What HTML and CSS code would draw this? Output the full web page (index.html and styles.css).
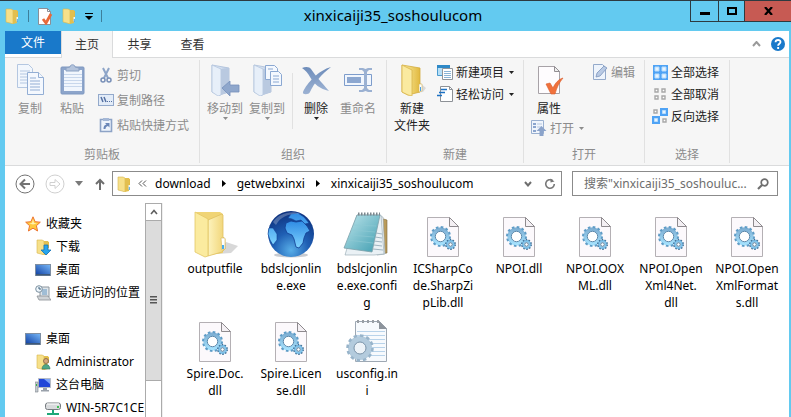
FILE: index.html
```html
<!DOCTYPE html>
<html lang="zh-CN">

<head>
    <meta charset="UTF-8">
    <meta name="viewport" content="width=device-width, initial-scale=1.0">
    <title>xinxicaiji35_soshoulucom</title>
    <link rel="stylesheet" href="styles.css">
</head>

<body>

    <!-- shared icons -->
    <svg class="sprites" width="0" height="0" aria-hidden="true">
        <defs>
            <linearGradient id="gold" x1="0" x2="1"><stop offset="0" stop-color="#fbf0a8"/><stop offset="1" stop-color="#e2b93f"/></linearGradient>
            <linearGradient id="paleGold" x1="0" x2="1"><stop offset="0" stop-color="#fdf3bd"/><stop offset="1" stop-color="#f0d373"/></linearGradient>
            <linearGradient id="fade" x1="0" x2="1"><stop offset="0" stop-color="#eef4fb"/><stop offset="1" stop-color="#b9cae3"/></linearGradient>
            <linearGradient id="steel" x1="0" x2="0" y1="0" y2="1"><stop offset="0" stop-color="#6d8cba"/><stop offset="1" stop-color="#9cb2d3"/></linearGradient>
            <linearGradient id="screen" x1="0" x2="1" y1="1" y2="0"><stop offset="0" stop-color="#1546a8"/><stop offset="1" stop-color="#74b4f5"/></linearGradient>
            <radialGradient id="globe" cx=".5" cy=".85" r=".85"><stop offset="0" stop-color="#58aee8"/><stop offset=".45" stop-color="#1f5fb4"/><stop offset="1" stop-color="#0c2f7c"/></radialGradient>
            <linearGradient id="land" x1="0" x2="0" y1="0" y2="1"><stop offset="0" stop-color="#2f8be4"/><stop offset="1" stop-color="#7fd4ff"/></linearGradient>
            <linearGradient id="pad" x1="0" x2="1" y1="0" y2="1"><stop offset="0" stop-color="#bfe6ec"/><stop offset="1" stop-color="#3f9db0"/></linearGradient>
            <linearGradient id="gear" x1="0" x2="0" y1="0" y2="1"><stop offset="0" stop-color="#7fb0d4"/><stop offset="1" stop-color="#a4e0fc"/></linearGradient>
        </defs>
        <symbol id="folder-small" viewBox="0 0 16 16">
            <path d="M3 3l9-1 2 1v10l-3 1-8-1z" fill="url(#gold)"/>
            <path d="M2 1h5l2 1v14l-3-1-4-1z" fill="#f6e08a" stroke="#d8b64c" stroke-width=".6"/>
            <path d="M9 2v14l4-1V2z" fill="#e2bf4f"/>
            <path d="M12.500 9v4.500h1.500V9z" fill="#eef6fb"/><path d="M12.800 11h1v3h-1z" fill="#4fa3dc"/>
        </symbol>
        <symbol id="folder-faded" viewBox="0 0 32 32">
            <path d="M3 1l17 3v24L10 31 3 28z" fill="url(#fade)" stroke="#a9bcd8" stroke-width=".8"/>
            <path d="M3 1l9 4v26l-3 1-6-4z" fill="#e7eff9" stroke="#b4c5de" stroke-width=".8"/>
            <path d="M12 5l8-1v24l-8 3z" fill="#b9c9e0"/>
        </symbol>
        <symbol id="dll" viewBox="0 0 34 42">
            <path d="M1.500 1.500h22l9 9v30h-31z" fill="#fcf9fc" stroke="#b4b0b4"/>
            <path d="M23.500 1.500v9h9z" fill="#f4f0f4" stroke="#8e8a8e"/>
            <circle cx="14.500" cy="20.500" r="7.200" fill="none" stroke="url(#gear)" stroke-width="4"/>
            <circle cx="14.500" cy="20.500" r="9.500" fill="none" stroke="#5f9cc6" stroke-width="2" stroke-dasharray="2.600 2.370"/>
            <circle cx="14.500" cy="20.500" r="5.200" fill="#fff" stroke="#4d7da3" stroke-width=".9"/>
            <circle cx="24.500" cy="28.500" r="3.500" fill="#fff" stroke="#7fc2ea" stroke-width="2.400"/>
            <circle cx="24.500" cy="28.500" r="4.800" fill="none" stroke="#3f6f96" stroke-width="1.300" stroke-dasharray="1.600 1.420"/>
            <circle cx="24.500" cy="28.500" r="1.800" fill="#fff" stroke="#3b6486" stroke-width=".8"/>
        </symbol>
        <symbol id="monitor" viewBox="0 0 16 14">
            <path d="M0 1h16v12H0z" fill="#7e8ea2"/><path d="M1 2h14v9H1z" fill="url(#screen)"/>
            <path d="M1 11h14v1.500H1z" fill="#3d5878"/>
        </symbol>
        <symbol id="down" viewBox="0 0 5 3"><path d="M0 0h5L2.500 3z" fill="currentColor"/></symbol>
    </svg>

    <header class="titlebar">
        <div class="quick">
            <svg width="16" height="16"><use href="#folder-small"/></svg>
            <span class="quick-sep"></span>
            <button type="button" aria-label="属性">
                <svg width="16" height="17" viewBox="0 0 16 17"><path d="M1.500.500h9l3 3v13h-12z" fill="#fff" stroke="#8a8f98"/><path d="M10.500.500v3h3" fill="none" stroke="#8a8f98"/><path d="M6 11l3 4 5-9" fill="none" stroke="#e8693a" stroke-width="2.800"/></svg>
            </button>
            <button type="button" aria-label="新建文件夹"><svg width="16" height="16"><use href="#folder-small"/></svg></button>
            <button type="button" aria-label="自定义快速访问工具栏">
                <svg width="8" height="7" viewBox="0 0 8 7"><path d="M0 0h8v1H0zM0 3h8L4 7z"/></svg>
            </button>
            <span class="quick-sep"></span>
        </div>
        <h1>xinxicaiji35_soshoulucom</h1>
        <div class="window-buttons">
            <button type="button" class="min" aria-label="最小化"><svg width="10" height="10"><path d="M0 6h10v3H0z"/></svg></button>
            <button type="button" class="max" aria-label="最大化"><svg width="10" height="8"><path d="M1 1h8v6H1z" fill="none" stroke="#000" stroke-width="2"/></svg></button>
            <button type="button" class="close" aria-label="关闭"><svg width="9" height="8"><path d="M1 0l7 8M8 0L1 8" stroke="#000" stroke-width="2.200"/></svg></button>
        </div>
    </header>

    <main class="window">

        <nav class="tabs">
            <button type="button" class="tab file">文件</button>
            <button type="button" class="tab active">主页</button>
            <button type="button" class="tab">共享</button>
            <button type="button" class="tab">查看</button>
            <div class="tabs-right">
                <button type="button" aria-label="最小化功能区"><svg width="9" height="6"><path d="M1 5l3.500-4L8 5" fill="none" stroke="#9a9a9a" stroke-width="2"/></svg></button>
                <button type="button" aria-label="帮助"><svg width="14" height="14" viewBox="0 0 14 14"><circle cx="7" cy="7" r="7" fill="#1979ca"/><path d="M4.500 5.200C4.700 2.300 9.600 2.300 9.500 5c0 1.700-2.400 1.800-2.400 3.800" fill="none" stroke="#fff" stroke-width="1.800"/><path d="M6.200 10h1.900v2H6.200z" fill="#fff"/></svg></button>
            </div>
        </nav>

        <section class="ribbon">

            <div class="group clipboard">
                <div class="tools">
                    <button type="button" class="big" disabled>
                        <svg width="32" height="32" viewBox="0 0 32 32"><g fill="#f2f7fd" stroke="#b4c7e1"><path d="M3.500.500h11l4 4v19h-15z"/><path d="M6 7h10M6 10h10M6 13h10M6 16h10M6 19h10"/></g><g fill="#f4f8fe" stroke="#93aed4"><path d="M13.500 8.500h11l5 5v17h-16z"/><path d="M24.500 8.500v5h5M16 14h6M16 17h10M16 20h10M16 23h10M16 26h10"/></g></svg>
                        <span>复制</span>
                    </button>
                    <button type="button" class="big" disabled>
                        <svg width="32" height="32" viewBox="0 0 32 32"><rect x="5" y="3" width="23" height="27" rx="1" fill="#8da5cb" stroke="#7f98c0"/><path d="M8 6h18v21H8z" fill="#f1f6fd"/><path d="M8 10.500h18M8 13.500h18M8 16.500h18M8 19.500h18M8 22.500h18" stroke="#c8d7ec"/><path d="M10 7V4l4-1c0-3 5-3 5 0l4 1v3z" fill="#b4c4dc" stroke="#8ba1c3"/></svg>
                        <span>粘贴</span>
                    </button>
                    <div class="list">
                        <button type="button" class="small" disabled>
                            <svg width="16" height="16" viewBox="0 0 16 16"><path d="M5 1l5 10M11 1L6 11" stroke="#8ea5c8" stroke-width="2"/><circle cx="5" cy="13" r="2" fill="none" stroke="#7890b8" stroke-width="1.500"/><circle cx="11" cy="13" r="2" fill="none" stroke="#7890b8" stroke-width="1.500"/></svg>
                            <span>剪切</span>
                        </button>
                        <button type="button" class="small" disabled>
                            <svg width="16" height="16" viewBox="0 0 16 16"><rect x=".500" y="2.500" width="15" height="11" fill="#e3ecf8" stroke="#93a9cb"/><path d="M3 5l2 5M6 5l2 5" stroke="#5470a2" stroke-width="1.500"/><path d="M9 9h1v1H9zM11 9h1v1h-1zM13 9h1v1h-1z" fill="#5470a2"/></svg>
                            <span>复制路径</span>
                        </button>
                        <button type="button" class="small" disabled>
                            <svg width="16" height="16" viewBox="0 0 16 16"><path d="M2.500 2.500h11v12h-11z" fill="#eef4fc" stroke="#8da3c6" stroke-width="1.600"/><path d="M5 1h6v3H5z" fill="#a5b8d6"/><path d="M5.500 12c0-3 1-4 3-4.500L7 6h4.500v4.500L10 9c-2 .500-2.500 1.500-2.500 3z" fill="#6a87b8"/></svg>
                            <span>粘贴快捷方式</span>
                        </button>
                    </div>
                </div>
                <div class="group-name">剪贴板</div>
            </div>

            <div class="group organize">
                <div class="tools">
                    <button type="button" class="big" disabled>
                        <svg width="32" height="32" viewBox="0 0 32 32"><use href="#folder-faded" width="32" height="32"/><path d="M13 24l8-7v4h9v7h-9v4z" fill="#8fa7cc" stroke="#7690bb" stroke-width=".800"/></svg>
                        <span>移动到</span>
                        <svg class="arrow" width="5" height="3"><use href="#down"/></svg>
                    </button>
                    <button type="button" class="big" disabled>
                        <svg width="32" height="32" viewBox="0 0 32 32"><use href="#folder-faded" width="32" height="32"/><g fill="#f4f8fe" stroke="#8ba8d2"><path d="M14.500 1.500h9l3 3v11h-12z"/><path d="M19.500 7.500h8l3 3v11h-11z"/><path d="M22 12h6M22 15h6M22 18h6M17 5h5"/></g></svg>
                        <span>复制到</span>
                        <svg class="arrow" width="5" height="3"><use href="#down"/></svg>
                    </button>
                    <span class="tool-sep"></span>
                    <button type="button" class="big">
                        <svg width="32" height="32" viewBox="0 0 32 32"><path d="M2 4c4-2 8-1 9 1 4 6 10 13 18 22-9-2-15-7-19-14C8 9 5 6 2 4z" fill="url(#steel)"/><path d="M31 3C22 10 14 19 10 28c-1 3-8 3-7 0C7 19 19 6 31 3z" fill="url(#steel)"/></svg>
                        <span>删除</span>
                        <svg class="arrow" width="5" height="3"><use href="#down"/></svg>
                    </button>
                    <button type="button" class="big" disabled>
                        <svg width="32" height="32" viewBox="0 0 32 32"><path d="M2.500 10.500h27v11h-27z" fill="#f1f6fd" stroke="#7d9ccb"/><path d="M5 13h14v6H5z" fill="#8ca7d0"/><path d="M17 4h4l2.500 1L26 4h4v2h-3l-2 2v16l2 2h3v2h-4l-2.500-1L21 28h-4v-2h3l2-2V8l-2-2h-3z" fill="#9bb1d2"/></svg>
                        <span>重命名</span>
                    </button>
                </div>
                <div class="group-name">组织</div>
            </div>

            <div class="group create">
                <div class="tools">
                    <button type="button" class="big">
                        <svg width="32" height="32" viewBox="0 0 32 32"><path d="M17 29l10-1 3-4-6-5z" fill="#d9d9d9"/><path d="M6 1l18 3v24l-12 3-6-3z" fill="url(#gold)" stroke="#d4ad3f" stroke-width=".800"/><path d="M6 1l10 5v26l-4-1-6-3z" fill="#faeaa0" stroke="#d9b54c" stroke-width=".800"/><path d="M23 20h3v7l-3 1z" fill="#fff" stroke="#d3b65b" stroke-width=".600"/><path d="M24 23h1v4h-1z" fill="#48a2e8"/></svg>
                        <span>新建<br>文件夹</span>
                    </button>
                    <div class="list tight">
                        <button type="button" class="small">
                            <svg width="16" height="16" viewBox="0 0 16 16"><path d="M.500 1.500h12v10H.500z" fill="#b7dff6" stroke="#4a9bd0"/><path d="M0 1h13v3H0z" fill="#2f89c7"/><path d="M5.500 4.500h10v11h-10z" fill="#fff" stroke="#90959b"/><path d="M7 7.500h7M7 9.500h7M7 11.500h7M7 13.500h7" stroke="#8ab4d6"/></svg>
                            <span>新建项目</span>
                            <svg class="arrow" width="5" height="3"><use href="#down"/></svg>
                        </button>
                        <button type="button" class="small">
                            <svg width="16" height="16" viewBox="0 0 16 16"><path d="M3.500.500h9l3 3v12h-12z" fill="#fff" stroke="#8d9196"/><path d="M12.500.500v3h3" fill="none" stroke="#8d9196"/><path d="M4 3.500h6M2 6.500h6M0 9.500h5" stroke="#1c72c4" stroke-width="1.600"/></svg>
                            <span>轻松访问</span>
                            <svg class="arrow" width="5" height="3"><use href="#down"/></svg>
                        </button>
                    </div>
                </div>
                <div class="group-name">新建</div>
            </div>

            <div class="group open">
                <div class="tools">
                    <div class="stack">
                        <button type="button" class="big">
                            <svg width="32" height="32" viewBox="0 0 32 32"><path d="M5.500 2.500h16l5 5v22h-21z" fill="#fefcfe" stroke="#a7a2a7"/><path d="M21.500 2.500v5h5z" fill="#eee" stroke="#928e92"/><path d="M13 20l4-1 3 5c2-5 6-9 10-10-4 5-6 9-8 16h-4z" fill="#f0713c" stroke="#d95a28" stroke-width=".600"/></svg>
                            <span>属性</span>
                        </button>
                        <button type="button" class="small" disabled>
                            <svg width="16" height="16" viewBox="0 0 16 16"><path d="M.500.500h12v13H.500z" fill="#f0f5fc" stroke="#9ab0d0"/><path d="M2 3h3v2H2zM2 6h3v2H2zM2 10h3v2H2z" fill="#8ba5ce"/><path d="M6 4h5M6 7h5" stroke="#b7c8e0"/><path d="M10.500 6l5 5h-3v5h-4v-5h-3z" fill="#8ba3ca"/></svg>
                            <span>打开</span>
                            <svg class="arrow" width="5" height="3"><use href="#down"/></svg>
                        </button>
                    </div>
                    <div class="list tight">
                        <button type="button" class="small" disabled>
                            <svg width="16" height="16" viewBox="0 0 16 16"><path d="M1.500.500h9l3 3v12h-12z" fill="#eef4fc" stroke="#94aacb"/><path d="M4 13l1-4 7-7 3 2-7 8z" fill="#b9cae4" stroke="#7c94bd" stroke-width=".800"/></svg>
                            <span>编辑</span>
                        </button>
                    </div>
                </div>
                <div class="group-name">打开</div>
            </div>

            <div class="group select">
                <div class="tools">
                    <div class="list tight">
                        <button type="button" class="small">
                            <svg width="16" height="16" viewBox="0 0 16 16"><path d="M1 1h15v15H1z" fill="#4fa3f5"/><path d="M3 3h4v4H3zM10 3h4v4h-4zM3 10h4v4H3zM10 10h4v4h-4z" fill="#e6f4ff" stroke="#b9dcfb"/></svg>
                            <span>全部选择</span>
                        </button>
                        <button type="button" class="small">
                            <svg width="16" height="16" viewBox="0 0 16 16"><path d="M3 3h3v3H3zM10 3h3v3h-3zM3 10h3v3H3zM10 10h3v3h-3z" fill="#fff" stroke="#a8a8a8" stroke-width="1.400"/></svg>
                            <span>全部取消</span>
                        </button>
                        <button type="button" class="small">
                            <svg width="16" height="16" viewBox="0 0 16 16"><path d="M8 0h8v8H8zM0 8h8v8H0z" fill="#4fa3f5"/><path d="M10.500 2.500h3v3h-3zM2.500 10.500h3v3h-3z" fill="#e6f4ff" stroke="#b9dcfb"/><path d="M2 2h3v3H2zM11 11h3v3h-3z" fill="#fff" stroke="#a8a8a8" stroke-width="1.400"/></svg>
                            <span>反向选择</span>
                        </button>
                    </div>
                </div>
                <div class="group-name">选择</div>
            </div>
        </section>

        <section class="location">
            <button type="button" aria-label="后退"><svg width="20" height="20" viewBox="0 0 20 20" fill="none" stroke="#737373"><circle cx="10" cy="10" r="9"/><path d="M15 10H6M10 5.500L5.500 10l4.500 4.500" stroke-width="2"/></svg></button>
            <button type="button" aria-label="前进"><svg width="20" height="20" viewBox="0 0 20 20" fill="none" stroke="#d0d0d0"><circle cx="10" cy="10" r="9"/><path d="M5 8.500h5v-3l5 4.500-5 4.500v-3H5z"/></svg></button>
            <button type="button" aria-label="最近浏览的位置"><svg width="8" height="5" viewBox="0 0 8 5"><path d="M0 0h8L4 5z" fill="#7a7a7a"/></svg></button>
            <button type="button" class="up" aria-label="上移"><svg width="10" height="12" viewBox="0 0 10 12"><path d="M5 12V2M1 6l4-4 4 4" fill="none" stroke="#6e6e6e" stroke-width="2"/></svg></button>
            <div class="address">
                <svg width="16" height="16"><use href="#folder-small"/></svg>
                <svg class="more" width="9" height="7" viewBox="0 0 9 7"><path d="M4 .500l-3 3 3 3M8 .500l-3 3 3 3" fill="none" stroke="#555"/></svg>
                <a href="#">download</a>
                <svg class="crumb" width="4" height="7"><path d="M0 0l4 3.500L0 7z"/></svg>
                <a href="#">getwebxinxi</a>
                <svg class="crumb" width="4" height="7"><path d="M0 0l4 3.500L0 7z"/></svg>
                <a href="#">xinxicaiji35_soshoulucom</a>
                <button type="button" class="history" aria-label="以前的位置"><svg width="8" height="6"><path d="M1 1l3 3.500L7 1" fill="none" stroke="#6e6e6e" stroke-width="2"/></svg></button>
                <button type="button" aria-label="刷新"><svg width="12" height="12" viewBox="0 0 12 12"><path d="M8.500 2.500A4.300 4.300 0 1 0 10.300 6" fill="none" stroke="#777" stroke-width="1.600"/><path d="M6.500.500v4l4-1z" fill="#777"/></svg></button>
            </div>
            <label class="search">
                <input type="text" placeholder="搜索&quot;xinxicaiji35_soshouluc..." aria-label="搜索">
                <svg width="12" height="12" viewBox="0 0 12 12"><circle cx="7.500" cy="4.500" r="3.300" fill="none" stroke="#6e6e6e" stroke-width="1.700"/><path d="M5 7l-4 4" stroke="#6e6e6e" stroke-width="2.200"/></svg>
            </label>
        </section>

        <section class="content">
            <aside class="tree">
                <ul>
                    <li>
                        <svg width="16" height="16" viewBox="0 0 16 16"><path d="M8 .800l2.100 4.900 5.200.500-3.900 3.500 1.200 5.300L8 12.200 3.400 15l1.200-5.300L.700 6.200l5.200-.500z" fill="#ffc93c" stroke="#ed7430"/><path d="M8 3l1 4 3 .500-4 1-4-1L7 7z" fill="#fff2b0"/></svg>
                        <span>收藏夹</span>
                    </li>
                    <li class="child">
                        <svg width="16" height="16" viewBox="0 0 16 16"><use href="#folder-small" width="16" height="16"/><path d="M9 6h4v5h3l-5 5-5-5h3z" fill="#27a5ec" stroke="#1471b5" stroke-width=".800"/></svg>
                        <span>下载</span>
                    </li>
                    <li class="child">
                        <svg width="16" height="14"><use href="#monitor"/></svg>
                        <span>桌面</span>
                    </li>
                    <li class="child">
                        <svg width="16" height="16" viewBox="0 0 16 16"><path d="M5 2h9v10H5z" fill="#dfe5ea" stroke="#8e979e"/><path d="M7 5h5M7 7h5M7 9h5" stroke="#6095c0"/><path d="M2 11h11l3 4H4z" fill="#cfd3d6" stroke="#8b9095" stroke-width=".800"/><circle cx="4" cy="4" r="3.300" fill="#eef6fc" stroke="#7c909f"/><path d="M4 2v2h2" fill="none" stroke="#3f617a"/></svg>
                        <span>最近访问的位置</span>
                    </li>
                </ul>
                <ul>
                    <li>
                        <svg width="16" height="14"><use href="#monitor"/></svg>
                        <span>桌面</span>
                    </li>
                    <li class="child">
                        <svg width="16" height="16" viewBox="0 0 16 16"><use href="#folder-small" width="16" height="16"/><circle cx="11" cy="7" r="2.500" fill="#d9a77a" stroke="#7e6249" stroke-width=".800"/><path d="M7 15c0-6 8-6 8 0z" fill="#4fa786" stroke="#38745e" stroke-width=".600"/></svg>
                        <span>Administrator</span>
                    </li>
                    <li class="child">
                        <svg width="16" height="16" viewBox="0 0 16 16"><path d="M3.500 1.500h12v9h-12z" fill="#2146d8" stroke="#b6bcc6"/><path d="M9 2h6v5z" fill="#7da4f8"/><path d="M8 11h4v2H8zM6 13h8v1.500H6z" fill="#9aa1ab"/><path d="M0 5h3v10H0z" fill="#c4c9cf" stroke="#7e858c" stroke-width=".600"/><path d="M1 7h1v2H1z" fill="#35b34a"/></svg>
                        <span>这台电脑</span>
                    </li>
                    <li class="grandchild">
                        <svg width="16" height="16" viewBox="0 0 16 16"><rect x=".500" y="3" width="15" height="6.500" rx="2" fill="#d8dadc" stroke="#777c80"/><path d="M2 4h12" stroke="#fff"/><path d="M12 6h2v2h-2z" fill="#3fbf55"/><path d="M7 10h2v3H7zM2 13h12v2H2z" fill="#1fa878"/></svg>
                        <span>WIN-5R7C1CE</span>
                    </li>
                </ul>
            </aside>
            <div class="scrollbar">
                <button type="button" aria-label="向上滚动"><svg width="8" height="6"><path d="M1 5l3-3.500L7 5" fill="none" stroke="#5f5f5f" stroke-width="1.600"/></svg></button>
                <div class="thumb"><svg width="7" height="8"><path d="M0 0h7v1.500H0zM0 3h7v1.500H0zM0 6h7v1.500H0z" fill="#555"/></svg></div>
            </div>

            <ul class="files">
                <li>
                    <svg width="48" height="48" viewBox="0 0 48 48"><path d="M26 44l14-1 7-7-12-4z" fill="#d8d8d8"/><path d="M5 2h24l3 2v39l-20 3z" fill="#f0d475"/><path d="M17 10l14-6 1 1v22l2 2v10l-3 3-14 4z" fill="url(#paleGold)" stroke="#e0c060" stroke-width=".800"/><path d="M4 2l13 7v37l-3 1-10-5z" fill="#fbeb9f" stroke="#e3c665" stroke-width=".800"/><path d="M30 28h4v11l-3 1z" fill="#fff" stroke="#d5b65a" stroke-width=".600"/><path d="M31 35h2v4h-2z" fill="#47aef0"/></svg>
                    <span>outputfile</span>
                </li>
                <li>
                    <svg width="48" height="48" viewBox="0 0 48 48"><ellipse cx="24" cy="45" rx="17" ry="2.500" fill="#c9ccd1"/><circle cx="24" cy="24" r="23" fill="url(#globe)"/><path d="M18 18l1-5 5-2 5 1 6-1 5 5 3 5-4 2-2 5-1 5-4 5-3-1-2-8-2-4-5-2z" fill="url(#land)" stroke="#123f93" stroke-width=".800"/><path d="M21 8l3-4 7-1 6 4 5 6-4 1-4-4-5 1-4-2zM2 18h4l4 6v6l-4 5-3-5-2-6z" fill="url(#land)" stroke="#123f93" stroke-width=".600"/><path d="M6 12C12 3 25 0 34 4 23 3 14 6 9 15z" fill="#fff" opacity=".25"/></svg>
                    <span>bdslcjonlin<br>e.exe</span>
                </li>
                <li>
                    <svg width="48" height="48" viewBox="0 0 48 48"><path d="M37 8l7 2v33l-8 1z" fill="#b99b5b" stroke="#7d6a3d" stroke-width=".600"/><path d="M35 6l5 1 2 37-8 1z" fill="#f3f6f8" stroke="#8fa1ab" stroke-width=".600"/><path d="M14 5h24l3 39-10 1H2z" fill="#eaf1f5" stroke="#91a4ae" stroke-width=".600"/><path d="M14 5h23l-8 37-28-4z" fill="url(#pad)" stroke="#7b9fa9" stroke-width=".800"/><path d="M11 15l22 1M8 20l24 2M6 25l25 2M4 30l26 3" stroke="#8ec9d3" stroke-width=".600"/><path d="M33 23l6 1M32 27l7 1M31 31l8 1M31 35l8 1M30 39l10 1" stroke="#9fb4c0"/><path d="M15 4h22" stroke="#7b878e" stroke-width="3" stroke-dasharray="1.500 1.500"/></svg>
                    <span>bdslcjonlin<br>e.exe.confi<br>g</span>
                </li>
                <li><svg width="34" height="42"><use href="#dll"/></svg><span>ICSharpCo<br>de.SharpZi<br>pLib.dll</span></li>
                <li><svg width="34" height="42"><use href="#dll"/></svg><span>NPOI.dll</span></li>
                <li><svg width="34" height="42"><use href="#dll"/></svg><span>NPOI.OOX<br>ML.dll</span></li>
                <li><svg width="34" height="42"><use href="#dll"/></svg><span>NPOI.Open<br>Xml4Net.<br>dll</span></li>
                <li><svg width="34" height="42"><use href="#dll"/></svg><span>NPOI.Open<br>XmlFormat<br>s.dll</span></li>
                <li><svg width="34" height="42"><use href="#dll"/></svg><span>Spire.Doc.<br>dll</span></li>
                <li><svg width="34" height="42"><use href="#dll"/></svg><span>Spire.Licen<br>se.dll</span></li>
                <li>
                    <svg width="44" height="44" viewBox="0 0 44 44"><path d="M10.500 2.500h24l7 7v33h-31z" fill="#f7fafd" stroke="#9ea8b3"/><path d="M12 12.500h28M12 16.500h28M12 20.500h28M12 24.500h28M12 28.500h28M12 32.500h28M12 36.500h28" stroke="#b8d3ea"/><path d="M34 2v8h8z" fill="#8d949c"/><path d="M12 2.500h22" stroke="#9a9fa5" stroke-width="3" stroke-dasharray="2 3"/><circle cx="15" cy="29" r="9" fill="none" stroke="#b3cbdd" stroke-width="6"/><circle cx="15" cy="29" r="12.500" fill="none" stroke="#98b4ca" stroke-width="2.500" stroke-dasharray="3.500 3"/><circle cx="15" cy="29" r="6" fill="#edf3f8" stroke="#7892a8"/></svg>
                    <span>usconfig.in<br>i</span>
                </li>
            </ul>
        </section>
    </main>

</body>

</html>
```
FILE: styles.css
```css
* {
    box-sizing: border-box;
}

body {
    display: flex;
    flex-direction: column;
    height: 100vh;
    margin: 0;
    overflow: hidden;
    background-color: #63caf0;
    border-top: 1px solid #2d3a40;
    font-family: "Noto Sans", "Noto Sans CJK SC", sans-serif;
    font-size: 12px;
    line-height: 17px;
    color: #000;
}

.sprites {
    position: absolute;
}

svg {
    display: block;
    flex: none;
}

button {
    display: flex;
    align-items: center;
    justify-content: center;
    margin: 0;
    padding: 0;
    border: 0;
    background: none;
    font: inherit;
    color: #222;
}

button:disabled {
    color: #8c8c8c;
}

ul {
    margin: 0;
    padding: 0;
    list-style: none;
}

/* title bar */
.titlebar {
    display: flex;
    height: 30px;
}

.quick {
    display: flex;
    align-items: center;
    gap: 8px;
    padding-left: 4px;
}

.quick-sep {
    width: 1px;
    height: 12px;
    background-color: #3d7f9b;
}

.titlebar h1 {
    flex: 1;
    margin: 0;
    padding-right: 6px;
    font-size: 15px;
    font-weight: normal;
    line-height: 28px;
    text-align: center;
}

.window-buttons {
    display: flex;
    height: 21px;
}

.window-buttons button {
    border: 1px solid #2d3a40;
    border-width: 0 0 1px 1px;
}

.window-buttons .min {
    width: 28px;
}

.window-buttons .max {
    width: 26px;
}

.window-buttons .close {
    width: 47px;
    background-color: #c75a53;
}

.window {
    display: flex;
    flex-direction: column;
    flex: 1;
    min-height: 0;
    margin: 0 2px 0 5px;
    background-color: #fff;
}

/* tabs */
.tabs {
    display: flex;
    align-items: flex-start;
    height: 27px;
    background-color: #fff;
    box-shadow: inset 0 -1px #dadbdc;
}

.tab {
    width: 53px;
    height: 26px;
    color: #333;
}

.tab.file {
    width: 56px;
    height: 23px;
    background-color: #1979ca;
    color: #fff;
}

.tab.active {
    width: 52px;
    height: 27px;
    border: 1px solid #dadbdc;
    border-width: 0 1px;
    background-color: #f6f6f6;
}

.tabs-right {
    display: flex;
    align-items: center;
    gap: 10px;
    height: 26px;
    margin-left: auto;
    padding-right: 4px;
}

/* ribbon */
.ribbon {
    display: flex;
    padding: 2px 0;
    height: 108px;
    background-color: #f6f6f6;
    border-bottom: 1px solid #dadbdc;
}

.group {
    display: flex;
    flex-direction: column;
    justify-content: space-between;
    flex: none;
    border-right: 1px solid #e1e1e1;
}

.tools {
    display: flex;
    align-items: flex-start;
    padding-left: 4px;
}

.group-name {
    color: #8c8c8c;
    text-align: center;
}

.big {
    flex-direction: column;
    width: 42px;
    padding-top: 4px;
}

.big span {
    margin-top: 4px;
    white-space: nowrap;
}

.small {
    gap: 3px;
    height: 22px;
    white-space: nowrap;
}

.small .arrow {
    margin-left: 2px;
}

.list {
    display: flex;
    flex-direction: column;
    align-items: flex-start;
    gap: 3px;
    padding-top: 4px;
}

.list.tight {
    gap: 0;
    padding-top: 1px;
}

.tool-sep {
    width: 1px;
    height: 56px;
    margin: 13px 2px 0 4px;
    background-color: #e1e1e1;
}

.clipboard {
    width: 195px;
}

.clipboard .list {
    margin-left: 5px;
}

.organize {
    width: 187px;
}

.create {
    width: 137px;
}

.create .list {
    margin-left: 4px;
}

.open {
    width: 121px;
}

.stack {
    display: flex;
    flex-direction: column;
    align-items: flex-start;
}

.stack .small {
    margin-left: 3px;
}

.open .list {
    margin-left: 8px;
}

.select {
    width: 85px;
}

.select .list {
    margin-left: 3px;
}

/* address row */
.location {
    display: flex;
    align-items: center;
    gap: 10px;
    height: 37px;
    padding: 0 11px 2px 10px;
}

.up {
    margin-left: 2px;
}

.address {
    display: flex;
    align-items: center;
    flex: 1;
    height: 25px;
    padding: 0 5px 0 3px;
    margin-left: -3px;
    border: 1px solid #8b8b8b;
}

.address .more {
    margin: 0 8px 0 6px;
}

.address .crumb {
    margin: 0 11px;
}

.address a {
    color: #000;
    text-decoration: none;
}

.address .history {
    margin: 0 12px 0 auto;
}

.search {
    display: flex;
    align-items: center;
    width: 27%;
    height: 25px;
    padding: 0 8px 0 11px;
    border: 1px solid #8b8b8b;
}

.search input {
    flex: 1;
    min-width: 0;
    padding: 0;
    border: 0;
    outline: 0;
    font: inherit;
}

.search input::placeholder {
    color: #6d6d6d;
    opacity: 1;
}

/* content */
.content {
    display: flex;
    flex: 1;
    min-height: 0;
}

.tree {
    width: 140px;
    padding-top: 9px;
    overflow: hidden;
}

.tree ul + ul {
    margin-top: 23px;
}

.tree li {
    display: flex;
    align-items: center;
    gap: 5px;
    height: 23px;
    padding-left: 20px;
    white-space: nowrap;
}

.tree .child {
    padding-left: 30px;
}

.tree .grandchild {
    padding-left: 40px;
}

.scrollbar {
    display: flex;
    flex-direction: column;
    width: 17px;
    border: 1px solid #ababab;
    border-width: 0 1px;
    box-shadow: 1px 0 #efefef;
}

.scrollbar button {
    height: 17px;
    border-top: 1px solid #ababab;
}

.thumb {
    display: flex;
    align-items: center;
    justify-content: center;
    height: 75%;
    border: 1px solid #ababab;
    border-width: 1px 0;
    background-color: #dcdcdc;
}

.files {
    display: grid;
    grid-template-columns: repeat(auto-fill, 76px);
    grid-auto-rows: 101px;
    align-content: start;
    gap: 4px 0;
    flex: 1;
    padding: 7px 0 0 15px;
}

.files li {
    display: grid;
    grid-template-rows: 48px auto;
    align-content: start;
    justify-items: center;
    align-items: end;
    gap: 2px;
    text-align: center;
}
```
